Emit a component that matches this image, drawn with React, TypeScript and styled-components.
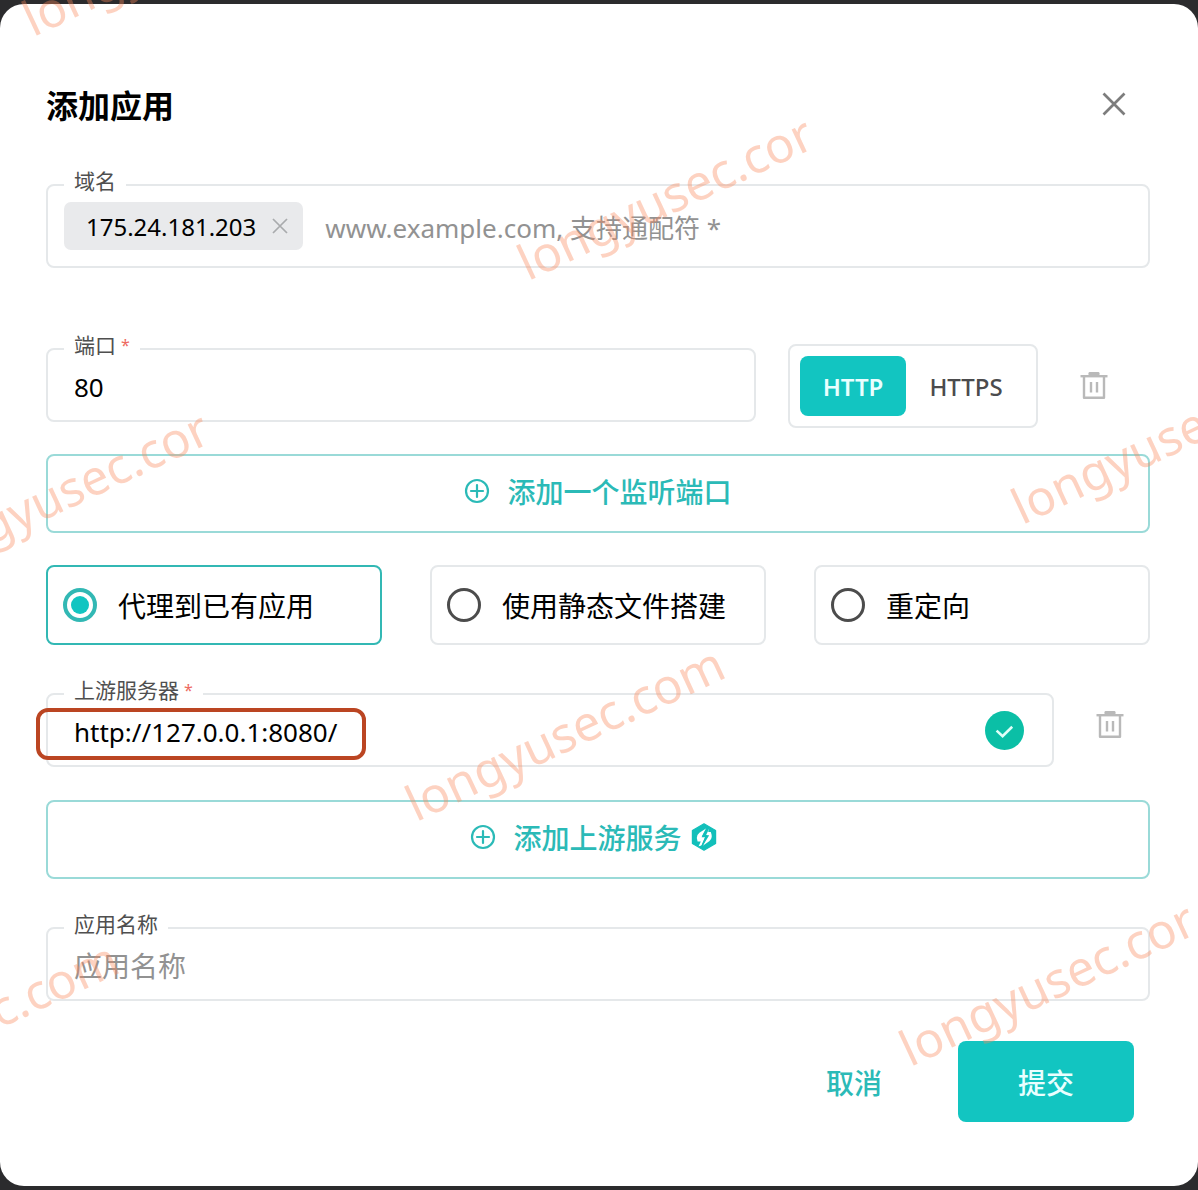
import React, { useState } from "react";
import styled, { createGlobalStyle } from "styled-components";

const teal = "#12c5c1";
const tealText = "#2bbab7";
const line = "#e5e8ea";

const GlobalStyle = createGlobalStyle`
  *, *::before, *::after { box-sizing: border-box; }
  html, body { margin: 0; }
  body { background: #2b2b2d; }
  body, button, input {
    font-family: "Noto Sans", "Noto Sans CJK SC", sans-serif;
  }
`;

const Backdrop = styled.div`
  position: relative;
  overflow: hidden;
  min-height: 100vh;
  padding: 4px 0;
  display: flex;
`;

const Dialog = styled.form`
  flex: 1;
  min-width: 0;
  padding: 80px 48px 64px 46px;
  border-radius: 24px;
  background: #fff;
  display: flex;
  flex-direction: column;
`;

const Header = styled.header`
  display: flex;
  align-items: center;
  justify-content: space-between;
  height: 40px;
  margin-bottom: 60px;
  padding-right: 16px;
`;

const Title = styled.h1`
  margin: 0;
  padding-top: 4px;
  font-size: 32px;
  line-height: 40px;
  font-weight: 700;
  color: #000;
`;

const IconButton = styled.button<{ $tone?: string }>`
  display: flex;
  align-items: center;
  justify-content: center;
  justify-self: center;
  width: 40px;
  height: 40px;
  padding: 0;
  border: 0;
  background: none;
  color: ${(p) => p.$tone ?? "#b9b9b9"};
  cursor: pointer;
`;

const Field = styled.div<{ $tall?: boolean }>`
  position: relative;
  display: flex;
  align-items: center;
  min-width: 0;
  height: ${(p) => (p.$tall ? 84 : 74)}px;
  padding: 0 ${(p) => (p.$tall ? 16 : 26)}px;
  border: 2px solid ${line};
  border-radius: 8px;
`;

const Label = styled.label`
  position: absolute;
  top: -19px;
  left: 16px;
  padding: 0 10px;
  background: #fff;
  font-size: 21px;
  line-height: 28px;
  color: #4f4f4f;
`;

const Required = styled.span`
  margin-left: 5px;
  font-size: 16px;
  line-height: 16px;
  vertical-align: 2px;
  color: #ee6a62;
`;

const TextInput = styled.input<{ $size?: number }>`
  flex: 1;
  min-width: 0;
  height: 44px;
  padding: 3px 0 0;
  border: 0;
  outline: 0;
  background: none;
  font-size: ${(p) => p.$size ?? 26}px;
  color: #000;
  &::placeholder { color: #929292; opacity: 1; }
`;

const Chip = styled.span`
  display: flex;
  align-items: center;
  gap: 16px;
  height: 48px;
  margin-right: 22px;
  padding: 0 15px 0 22px;
  border-radius: 7px;
  background: #e9eaec;
  font-size: 24px;
  color: #000;
`;

const ChipRemove = styled.button`
  display: flex;
  padding: 0;
  border: 0;
  background: none;
  color: #a9abad;
  cursor: pointer;
`;

const PortRow = styled.div`
  display: grid;
  grid-template-columns: minmax(0, 1fr) 250px 112px;
  align-items: center;
  margin: 76px 0 26px;
`;

const PortField = styled(Field)`
  margin: 0 32px 2px 0;
`;

const Segmented = styled.div`
  display: flex;
  height: 84px;
  padding: 10px;
  border: 2px solid ${line};
  border-radius: 8px;
`;

const Segment = styled.button<{ $on: boolean }>`
  width: ${(p) => (p.$on ? 106 : 120)}px;
  height: 60px;
  padding: 0;
  border: 0;
  border-radius: 8px;
  background: ${(p) => (p.$on ? teal : "none")};
  color: ${(p) => (p.$on ? "#e9ffff" : "#4b4b4d")};
  font-size: 24px;
  font-weight: ${(p) => (p.$on ? 600 : 500)};
  cursor: pointer;
`;

const AddButton = styled.button`
  display: flex;
  align-items: center;
  justify-content: center;
  height: 79px;
  padding: 0 0 6px;
  border: 2px solid #9adad8;
  border-radius: 8px;
  background: #fff;
  color: ${tealText};
  font-size: 28px;
  font-weight: 500;
  cursor: pointer;
  svg:first-child { margin-right: 17px; }
  span + svg { margin: 0 8px; }
`;

const Choices = styled.div`
  display: grid;
  grid-template-columns: repeat(3, minmax(0, 1fr));
  gap: 48px;
  margin: 32px 0 48px;
`;

const Choice = styled.label<{ $on: boolean }>`
  display: flex;
  align-items: center;
  gap: 21px;
  height: 80px;
  padding: 0 15px;
  border: 2px solid ${(p) => (p.$on ? "#32b8b4" : line)};
  border-radius: 8px;
  font-size: 28px;
  color: #000;
  cursor: pointer;
`;

const Radio = styled.input`
  appearance: none;
  flex: none;
  display: grid;
  place-items: center;
  width: 34px;
  height: 34px;
  margin: 0;
  border: 3px solid #4c4c4c;
  border-radius: 50%;
  &:checked { border: 4px solid #32b8b4; }
  &:checked::before {
    content: "";
    width: 18px;
    height: 18px;
    border-radius: 50%;
    background: ${teal};
  }
`;

const UpstreamRow = styled.div`
  display: grid;
  grid-template-columns: minmax(0, 1fr) 80px;
  column-gap: 16px;
  margin-bottom: 33px;
`;

const UpstreamField = styled(Field)`
  padding-right: 28px;
`;

const UpstreamTrash = styled(IconButton)`
  margin-top: 12px;
`;

const Highlight = styled.div`
  position: absolute;
  top: 13px;
  left: -12px;
  width: 330px;
  height: 52px;
  border: 4px solid #bb4522;
  border-radius: 12px;
  pointer-events: none;
`;

const NameField = styled(Field)`
  margin: 48px 0 40px;
`;

const Actions = styled.footer`
  display: flex;
  justify-content: flex-end;
  gap: 16px;
  padding-right: 16px;
`;

const Action = styled.button<{ $primary?: boolean }>`
  width: 176px;
  height: 81px;
  padding: 0;
  border: 0;
  border-radius: 8px;
  background: ${(p) => (p.$primary ? teal : "none")};
  color: ${(p) => (p.$primary ? "#e9ffff" : tealText)};
  font-size: 28px;
  font-weight: 500;
  cursor: pointer;
`;

const Watermark = styled.span<{ $x: number; $y: number }>`
  position: absolute;
  left: ${(p) => p.$x}px;
  top: ${(p) => p.$y}px;
  height: 0;
  line-height: 0;
  font-size: 49px;
  color: rgba(249, 137, 92, 0.38);
  white-space: nowrap;
  transform: rotate(-25deg);
  transform-origin: 0 0;
  pointer-events: none;
`;

const CloseIcon = ({ size, stroke }: { size: number; stroke: number }) => (
  <svg width={size} height={size} viewBox="0 0 24 24" fill="none" stroke="currentColor" strokeWidth={stroke}>
    <path d="M1.5 1.5 22.5 22.5M22.5 1.5 1.5 22.5" />
  </svg>
);

const TrashIcon = () => (
  <svg width="28" height="28" viewBox="0 0 28 28" fill="none" stroke="currentColor" strokeWidth="2.4">
    <path d="M.5 4.2h27" />
    <path d="M8.5 4V1.2q0-1.2 1.2-1.2h8.6q1.2 0 1.2 1.2V4z" fill="currentColor" stroke="none" />
    <path d="M4 4.5V25.8H24V4.5" strokeLinejoin="round" />
    <path d="M11 10v10.5M17 10v10.5" />
  </svg>
);

const PlusIcon = () => (
  <svg width="26" height="26" viewBox="0 0 26 26" fill="none" stroke="currentColor" strokeWidth="2.2">
    <circle cx="13" cy="13" r="11" />
    <path d="M13 7v12M7 13h12" strokeLinecap="round" />
  </svg>
);

const CheckIcon = () => (
  <svg width="39" height="39" viewBox="0 0 39 39" fill="none">
    <circle cx="19.5" cy="19.5" r="19.5" fill="#0bbfa6" />
    <path d="m11.6 19.6 6 5.6 9.6-9.4" stroke="#dffff8" strokeWidth="2.6" />
  </svg>
);

const HexIcon = () => (
  <svg width="28" height="28" viewBox="0 0 28 28">
    <path
      d="M14 .8 25.6 7.4v13.2L14 27.2 2.4 20.6V7.4z"
      fill="#12bfba"
      stroke="#12bfba"
      strokeWidth="1.2"
      strokeLinejoin="round"
    />
    <path d="M16.8 5 9.4 9.8Q6.6 12 6.8 15l.8 3.4h3.2L8.6 23.2l3-.6 3.6-8.4h-3.6z" fill="#fff" />
    <path d="M19.2 5.6 16 12.2h3.2l-6.4 10.6 6.4-4.6q3.2-2.6 2.4-6.4L20.8 9h-2.6z" fill="#fff" />
    <path d="M17.4 4.4 13 12.8h3.4L11.6 24" fill="none" stroke="#12bfba" strokeWidth="1.5" />
  </svg>
);

const marks = [
  { text: "longyusec.cor", x: 25, y: 20 },
  { text: "longyusec.cor", x: 520, y: 264 },
  { text: "longyusec.cor", x: -84, y: 559 },
  { text: "longyusec.cor", x: 1014, y: 508 },
  { text: "longyusec.com", x: 408, y: 805 },
  { text: "longyusec.com", x: -198, y: 1100 },
  { text: "longyusec.cor", x: 902, y: 1050 },
];

const modes = ["代理到已有应用", "使用静态文件搭建", "重定向"];

export default function App() {
  const [mode, setMode] = useState(0);
  const [scheme, setScheme] = useState("HTTP");
  const [port, setPort] = useState("80");
  const [upstream, setUpstream] = useState("http://127.0.0.1:8080/");

  return (
    <>
      <GlobalStyle />
      <Backdrop>
        <Dialog onSubmit={(e) => e.preventDefault()}>
          <Header>
            <Title>添加应用</Title>
            <IconButton type="button" aria-label="关闭" $tone="#7d7d7d">
              <CloseIcon size={24} stroke={2.7} />
            </IconButton>
          </Header>

          <Field $tall>
            <Label htmlFor="domain">域名</Label>
            <Chip>
              175.24.181.203
              <ChipRemove type="button" aria-label="移除">
                <CloseIcon size={16} stroke={2.6} />
              </ChipRemove>
            </Chip>
            <TextInput id="domain" placeholder="www.example.com, 支持通配符 *" />
          </Field>

          <PortRow>
            <PortField>
              <Label htmlFor="port">
                端口<Required>*</Required>
              </Label>
              <TextInput id="port" value={port} onChange={(e) => setPort(e.target.value)} />
            </PortField>
            <Segmented>
              {["HTTP", "HTTPS"].map((s) => (
                <Segment key={s} type="button" $on={s === scheme} onClick={() => setScheme(s)}>
                  {s}
                </Segment>
              ))}
            </Segmented>
            <IconButton type="button" aria-label="删除端口">
              <TrashIcon />
            </IconButton>
          </PortRow>

          <AddButton type="button">
            <PlusIcon />
            <span>添加一个监听端口</span>
          </AddButton>

          <Choices>
            {modes.map((m, i) => (
              <Choice key={m} $on={i === mode}>
                <Radio type="radio" name="mode" checked={i === mode} onChange={() => setMode(i)} />
                {m}
              </Choice>
            ))}
          </Choices>

          <UpstreamRow>
            <UpstreamField>
              <Label htmlFor="upstream">
                上游服务器<Required>*</Required>
              </Label>
              <TextInput id="upstream" value={upstream} onChange={(e) => setUpstream(e.target.value)} />
              <CheckIcon />
              <Highlight />
            </UpstreamField>
            <UpstreamTrash type="button" aria-label="删除上游服务器">
              <TrashIcon />
            </UpstreamTrash>
          </UpstreamRow>

          <AddButton type="button">
            <PlusIcon />
            <span>添加上游服务</span>
            <HexIcon />
          </AddButton>

          <NameField>
            <Label htmlFor="name">应用名称</Label>
            <TextInput id="name" placeholder="应用名称" $size={28} />
          </NameField>

          <Actions>
            <Action type="button">取消</Action>
            <Action type="submit" $primary>
              提交
            </Action>
          </Actions>
        </Dialog>
        {marks.map((m) => (
          <Watermark key={`${m.x},${m.y}`} $x={m.x} $y={m.y} aria-hidden="true">
            {m.text}
          </Watermark>
        ))}
      </Backdrop>
    </>
  );
}
